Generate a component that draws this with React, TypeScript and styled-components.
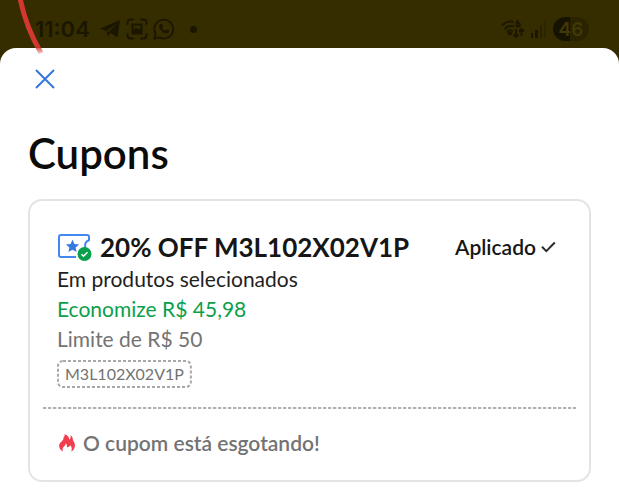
import React from "react";
import styled, { createGlobalStyle } from "styled-components";

const GlobalStyle = createGlobalStyle`
  * { box-sizing: border-box; }
  body {
    margin: 0;
    background: #ffffff;
    color: #161616;
    font-family: Lato, "Liberation Sans", sans-serif;
  }
`;

const Page = styled.div`
  position: relative;
  min-height: 100vh;
  background: #352d00;
`;

const StatusBar = styled.header`
  display: flex;
  align-items: center;
  justify-content: space-between;
  height: 48px;
  padding: 10px 30px 0 35px;
  color: #1a1600;
`;

const StatusGroup = styled.div<{ $gap: number }>`
  display: flex;
  align-items: center;
  gap: ${(p) => p.$gap}px;
`;

const Clock = styled.time`
  margin-right: 4px;
  font-family: Inter, sans-serif;
  font-size: 22px;
  font-weight: 600;
  line-height: 24px;
`;

const Dot = styled.span`
  width: 7px;
  height: 7px;
  margin-left: 10px;
  border-radius: 50%;
  background: currentColor;
`;

const Battery = styled.span`
  display: flex;
  align-items: center;
  justify-content: center;
  width: 36px;
  height: 24px;
  border-radius: 12px;
  background: linear-gradient(90deg, #161300 46%, #292300 46%);
  color: #403806;
  font-family: Inter, sans-serif;
  font-size: 19px;
  font-weight: 600;
`;

const Sheet = styled.main`
  min-height: calc(100vh - 48px);
  padding: 18px 28px;
  border-radius: 16px 16px 0 0;
  background: #ffffff;
`;

const CloseButton = styled.button`
  display: flex;
  margin-left: 4px;
  padding: 0;
  border: 0;
  background: none;
  cursor: pointer;
`;

const Title = styled.h1`
  margin: 37px 0 22px;
  color: #0b0b0b;
  font-size: 42px;
  font-weight: 600;
  line-height: 48px;
`;

const Card = styled.article`
  border: 2px solid #e4e4e4;
  border-radius: 14px;
`;

const CardBody = styled.div`
  padding: 29px 27px 19px;
`;

const Heading = styled.div`
  display: flex;
  align-items: center;
  gap: 7px;
  min-height: 34px;
`;

const CouponName = styled.h2`
  flex: 1;
  margin: 0;
  font-size: 26px;
  font-weight: 700;
  line-height: 32px;
  white-space: nowrap;
`;

const Applied = styled.span`
  display: flex;
  align-items: center;
  gap: 5px;
  margin-right: 6px;
  font-size: 21px;
  font-weight: 600;
  line-height: 30px;
`;

const Line = styled.p<{ $color: string }>`
  margin: 0;
  color: ${(p) => p.$color};
  font-size: 21px;
  line-height: 30px;
`;

const Code = styled.div`
  display: flex;
  align-items: center;
  position: relative;
  width: fit-content;
  height: 28px;
  margin-top: 6px;
  padding: 0 8px;
  color: #737373;
  font-size: 16px;
  line-height: 24px;
`;

const CodeOutline = styled.svg`
  position: absolute;
  inset: 1px;
  width: calc(100% - 2px);
  height: calc(100% - 2px);
  overflow: visible;
`;

const Divider = styled.hr`
  height: 2px;
  margin: 0 13px;
  border: 0;
  background: repeating-linear-gradient(90deg, #b0b0b0 0 3px, #e8e8e8 3px 4px, #ffffff 4px 5px);
`;

const CardFooter = styled.footer`
  display: flex;
  align-items: center;
  gap: 7px;
  padding: 19px 28px 22px;
  color: #737373;
  font-size: 21px;
  font-weight: 600;
  line-height: 30px;
`;

const RedStroke = styled.svg`
  position: absolute;
  top: 0;
  left: 0;
  pointer-events: none;
`;

const TelegramIcon = () => (
  <svg width="22" height="20" viewBox="0 0 22 20" fill="currentColor" aria-hidden="true">
    <path d="M21 1 18.5 18.5 11.5 14 8.8 17.5 7.5 12 1 9.8Z" />
    <path d="M7.5 12 17 5 9.3 13.2Z" fill="#352d00" />
  </svg>
);

const CaptureIcon = () => (
  <svg width="22" height="22" viewBox="0 0 22 22" fill="none" stroke="currentColor" strokeWidth="2" strokeLinecap="round" aria-hidden="true">
    <path d="M1.5 6V4.5a3 3 0 0 1 3-3H7M15 1.5h2.5a3 3 0 0 1 3 3V6M20.5 16v1.5a3 3 0 0 1-3 3H15M7 20.5H4.5a3 3 0 0 1-3-3V16" />
    <path d="M6.5 6.5h9v9h-9Z" />
    <path d="m7 14 3-3 2 2 2-1.5 1.5 3.5h-8Z" fill="currentColor" />
  </svg>
);

const WhatsappIcon = () => (
  <svg width="22" height="22" viewBox="0 0 22 22" fill="none" stroke="currentColor" strokeWidth="1.8" aria-hidden="true">
    <path d="M1.2 20.8 2.6 15.8A9.4 9.4 0 1 1 6.3 19.4Z" strokeLinejoin="round" />
    <path d="M7.6 5.8h1.2l1.1 2.6-1 1.4c.8 1.5 1.9 2.4 3.3 3l1.3-1.4 2.6 1.2c.1 1.8-1.1 2.9-2.8 2.9-3.2-.3-6.8-3.8-7.1-7 0-1.2.5-2.1 1.4-2.7Z" fill="currentColor" stroke="none" />
  </svg>
);

const WifiIcon = () => (
  <svg width="24" height="22" viewBox="0 0 24 22" fill="none" stroke="currentColor" strokeWidth="1.8" aria-hidden="true">
    <path d="M1 7.5C5 3.3 9 2.7 13 3.8M3.5 11c3-3 6-3.8 9.5-2.4M6 14c1.8-1.8 4-2.1 6-1" />
    <path d="m9 18-2.6-3q2.6-2 5.2 0Z" fill="currentColor" stroke="none" />
    <path d="M17.5 2c-1.5 1-2 2-2 4" />
    <circle cx="17.2" cy="6.7" r="1.7" />
    <path d="M15 11v8m-2.5-2.5L15 19l2.5-2.5M20.5 18v-7M18 13.5l2.5-2.5 2.5 2.5" />
  </svg>
);

const SignalIcon = () => (
  <svg width="16" height="18" viewBox="0 0 16 18" fill="currentColor" aria-hidden="true">
    <rect x="0" y="13" width="2" height="5" />
    <rect x="4" y="10" width="3" height="8" />
    <rect x="9" y="5" width="2" height="13" opacity=".45" />
    <rect x="13" y="1" width="2" height="17" opacity=".3" />
  </svg>
);

const CloseIcon = () => (
  <svg width="26" height="26" viewBox="0 0 26 26" fill="none" stroke="#3576dc" strokeWidth="2" aria-hidden="true">
    <path d="m4 4 18 18M22 4 4 22" />
  </svg>
);

const CouponIcon = () => (
  <svg width="36" height="30" viewBox="0 0 36 30" fill="none" aria-hidden="true">
    <path
      d="M4 3H30Q32 3 32 5V8.2C29.8 9 28.2 10.7 28.2 13V17.5M19 25H4Q2 25 2 23V5Q2 3 4 3"
      stroke="#4288ee"
      strokeWidth="2"
      strokeLinejoin="round"
    />
    <path d="m15.5 7.6 1.9 4.3 4.7.5-3.5 3.1 1 4.6-4.1-2.4-4.1 2.4 1-4.6-3.5-3.1 4.7-.5Z" fill="#3579e4" />
    <circle cx="27.5" cy="22" r="7" fill="#0aa04b" />
    <path d="m24.5 22.2 2 2 4-4" stroke="#fff" strokeWidth="1.5" />
  </svg>
);

const CheckIcon = () => (
  <svg width="15" height="12" viewBox="0 0 15 12" fill="none" stroke="#2b2b2b" strokeWidth="2" aria-hidden="true">
    <path d="m1 5.8 4.3 4.3L13.8 1.5" />
  </svg>
);

const FlameIcon = () => (
  <svg width="18" height="20" viewBox="0 0 18 20" fill="#f23d4f" aria-hidden="true">
    <path d="M6.6 1C10 2.4 11.2 4.2 11.3 6.7 12.6 5.5 12.9 4.2 12.6 2.3 14.4 3.6 15 5.1 14.9 7.2 16.8 9.3 17.4 12 16.6 14.5 16 16.5 15 17.6 13.2 18.6 14.2 15.7 13.8 13.7 12.3 12.2 11.5 13.6 10.4 14.2 9 14.3 9.2 12.6 8.8 11.5 7.7 10.3 7.5 12 6.9 12.8 5.8 13.8 4.4 15 4.3 16.7 5 18.6 2.6 17.5 1.2 15.3 1.1 12.8 1 9.2 5.8 8.4 5.6 4.3 6.7 3.4 6.9 2.4 6.6 1Z" />
  </svg>
);

export default function App() {
  return (
    <Page>
      <GlobalStyle />
      <StatusBar>
        <StatusGroup $gap={5}>
          <Clock>11:04</Clock>
          <TelegramIcon />
          <CaptureIcon />
          <WhatsappIcon />
          <Dot />
        </StatusGroup>
        <StatusGroup $gap={6}>
          <WifiIcon />
          <SignalIcon />
          <Battery>46</Battery>
        </StatusGroup>
      </StatusBar>
      <Sheet>
        <CloseButton type="button" aria-label="Fechar">
          <CloseIcon />
        </CloseButton>
        <Title>Cupons</Title>
        <Card>
          <CardBody>
            <Heading>
              <CouponIcon />
              <CouponName>20% OFF M3L102X02V1P</CouponName>
              <Applied>
                Aplicado
                <CheckIcon />
              </Applied>
            </Heading>
            <Line $color="#1f1f1f">Em produtos selecionados</Line>
            <Line $color="#0aa04b">Economize R$ 45,98</Line>
            <Line $color="#737373">Limite de R$ 50</Line>
            <Code>
              <CodeOutline aria-hidden="true">
                <rect x="0" y="0" width="100%" height="100%" rx="5" fill="none" stroke="#a8a8a8" strokeWidth="2" strokeDasharray="3 2" />
              </CodeOutline>
              M3L102X02V1P
            </Code>
          </CardBody>
          <Divider />
          <CardFooter>
            <FlameIcon />
            O cupom está esgotando!
          </CardFooter>
        </Card>
      </Sheet>
      <RedStroke width="50" height="60" viewBox="0 0 50 60" fill="none" aria-hidden="true">
        <defs>
          <linearGradient id="stroke-fade" x1="0" y1="0" x2="0" y2="54" gradientUnits="userSpaceOnUse">
            <stop offset=".85" stopColor="#d4372f" />
            <stop offset="1" stopColor="#d4372f" stopOpacity=".2" />
          </linearGradient>
        </defs>
        <path d="M20-2C24 18 31 36 41 53" stroke="url(#stroke-fade)" strokeWidth="5" />
      </RedStroke>
    </Page>
  );
}
